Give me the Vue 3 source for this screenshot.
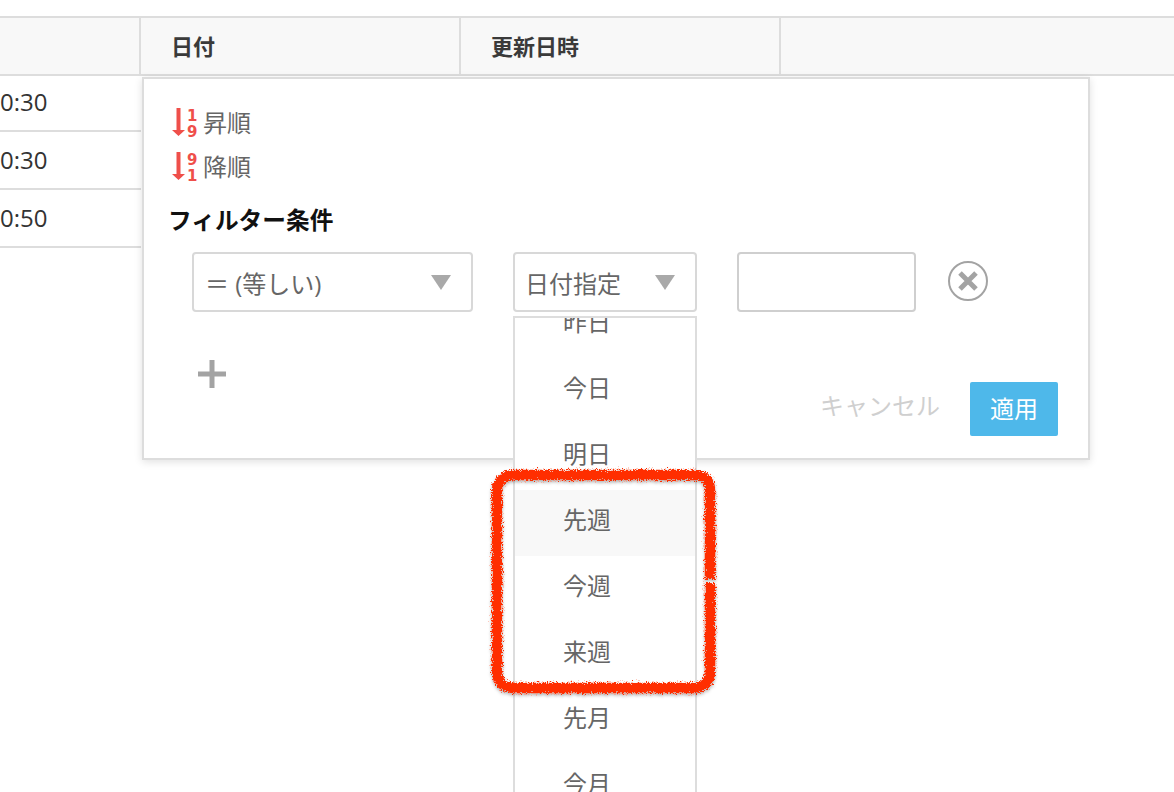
<script setup>
const rows = ['0:30', '0:30', '0:50']
const sorts = [
  { label: '昇順', a: '1', b: '9' },
  { label: '降順', a: '9', b: '1' },
]
const options = [
  { label: '昨日' }, { label: '今日' }, { label: '明日' },
  { label: '先週', on: true }, { label: '今週' }, { label: '来週' },
  { label: '先月' }, { label: '今月' },
]
</script>

<template>
  <div class="page">
    <div class="head">
      <div class="hcell first"></div>
      <div class="hcell mid">日付</div>
      <div class="hcell mid">更新日時</div>
      <div class="hcell"></div>
    </div>
    <div v-for="(r, i) in rows" :key="i" class="row">{{ r }}</div>

    <div class="popover">
      <div v-for="s in sorts" :key="s.label" class="sort">
        <span class="sicon">
          <svg width="13" height="28" viewBox="0 0 13 28"><path d="M4.500 0h4v22h4.500l-6.500 6-6.500-6h4.500z" fill="#ef4f4a"/></svg>
          <span class="digits"><span>{{ s.a }}</span><span>{{ s.b }}</span></span>
        </span>
        <span class="slabel">{{ s.label }}</span>
      </div>
      <div class="title">フィルター条件</div>
      <div class="filters">
        <div class="select wide"><span>＝ (等しい)</span><i class="caret"></i></div>
        <div class="select narrow"><span>日付指定</span><i class="caret"></i></div>
        <div class="input"></div>
        <svg class="close" width="40" height="40" viewBox="0 0 40 40">
          <circle cx="20" cy="20" r="19" fill="none" stroke="#a3a3a3" stroke-width="2"/>
          <path d="M12 12l16 16M28 12l-16 16" stroke="#a3a3a3" stroke-width="5" fill="none"/>
        </svg>
      </div>
      <div class="foot">
        <svg class="plus" width="28" height="28" viewBox="0 0 28 28"><path d="M11.500 0h5v11.500H28v5H16.500V28h-5V16.500H0v-5h11.500z" fill="#a3a3a3"/></svg>
        <div class="actions">
          <span class="cancel">キャンセル</span>
          <span class="apply">適用</span>
        </div>
      </div>
    </div>

    <div class="menu">
      <div v-for="o in options" :key="o.label" class="opt" :class="{ on: o.on }"><span>{{ o.label }}</span></div>
    </div>

    <svg class="mark" width="240" height="240" viewBox="0 0 240 240">
      <defs>
        <filter id="rough" x="-10%" y="-10%" width="120%" height="120%">
          <feTurbulence type="fractalNoise" baseFrequency="0.8" numOctaves="2" seed="4"/>
          <feDisplacementMap in="SourceGraphic" scale="8" xChannelSelector="R" yChannelSelector="G"/>
          <feDropShadow dx="0" dy="2" stdDeviation="1.500" flood-color="#000" flood-opacity="0.3"/>
        </filter>
      </defs>
      <g filter="url(#rough)" fill="none" stroke="#ff2d00" stroke-width="10.500">
        <path d="M225 120V32Q225 16 209 16H30Q12 16 12 34V211Q12 229 30 229H208Q225 229 225 212V124"/>
      </g>
    </svg>
  </div>
</template>

<style>
html, body { margin: 0; background: #fff; }
</style>

<style scoped>
.page {
  position: relative;
  width: 1174px;
  height: 792px;
  overflow: hidden;
  padding-top: 16px;
  box-sizing: border-box;
  background: #fff;
  font-family: "Open Sans", "Noto Sans CJK JP", sans-serif;
  font-size: 24px;
  color: #666;
}
.head {
  display: grid;
  grid-template-columns: 139px 320px 320px 1fr;
  height: 60px;
  box-sizing: border-box;
  background: #f8f8f8;
  border-top: 2px solid #ddd;
  border-bottom: 2px solid #ddd;
}
.hcell {
  display: flex;
  align-items: center;
  padding-left: 30px;
  box-sizing: border-box;
  border-left: 2px solid #ddd;
  font-size: 22px;
  font-weight: 700;
  color: #3a3a3a;
  padding-bottom: 2px;
}
.hcell.first { border-left: 0; }
.row {
  width: 141px;
  height: 58px;
  box-sizing: border-box;
  border-bottom: 2px solid #ddd;
  display: flex;
  align-items: center;
  color: #333;
  padding-bottom: 1px;
}
.head + .row { height: 56px; padding-bottom: 3px; }
.popover {
  position: absolute;
  left: 142px;
  top: 77px;
  width: 948px;
  height: 383px;
  box-sizing: border-box;
  background: #fff;
  border: 2px solid #ddd;
  box-shadow: 0 2px 8px rgba(0, 0, 0, 0.12);
  padding: 22px 30px 0 25px;
}
.sort {
  display: flex;
  align-items: center;
  gap: 6px;
  height: 44px;
  padding-left: 3px;
  line-height: 40px;
}
.sicon { display: flex; gap: 2px; height: 28px; align-items: flex-start; margin-top: -2px; }
.sicon svg { display: block; }
.digits {
  display: flex;
  flex-direction: column;
  width: 10px;
  font-size: 15px;
  font-weight: 700;
  line-height: 16px;
  color: #ef4f4a;
  font-family: "DejaVu Sans", sans-serif;
  text-align: center;
}
.title {
  margin-top: 10px;
  margin-left: -1px;
  font-size: 23.700px;
  font-weight: 700;
  line-height: 42px;
  padding-bottom: 2px;
  color: #111;
}
.filters {
  display: flex;
  align-items: center;
  margin-top: 9px;
  margin-left: 23px;
  gap: 40px;
}
.select, .input {
  height: 60px;
  box-sizing: border-box;
  border: 2px solid #d8d8d8;
  border-radius: 4px;
}
.select {
  display: flex;
  align-items: center;
  justify-content: space-between;
  padding: 0 20px 0 11px;
}
.wide { width: 281px; }
.narrow { width: 184px; padding-left: 10px; }
.input { width: 179px; border-color: #cfcfcf; }
.caret {
  width: 0;
  height: 0;
  border-left: 10px solid transparent;
  border-right: 10px solid transparent;
  border-top: 15px solid #a9a9a9;
}
.close { margin-left: -8px; margin-top: -2px; }
.foot {
  display: flex;
  justify-content: space-between;
  align-items: flex-start;
  margin-top: 48px;
  margin-left: 29px;
}
.plus { display: block; }
.actions {
  display: flex;
  align-items: center;
  gap: 30px;
  margin-top: 22px;
}
.cancel { color: #cfcfcf; padding-bottom: 9px; }
.apply {
  width: 88px;
  height: 54px;
  border-radius: 2px;
  background: #4eb8ea;
  color: #fff;
  display: flex;
  align-items: center;
  justify-content: center;
  padding-bottom: 4px;
  box-sizing: border-box;
}
.menu {
  position: absolute;
  left: 513px;
  top: 316px;
  width: 184px;
  height: 520px;
  box-sizing: border-box;
  border: 2px solid #ddd;
  background: #fff;
  overflow: hidden;
}
.opt {
  height: 66px;
  padding: 0 0 10px 48px;
  box-sizing: border-box;
  display: flex;
  align-items: center;
}
.opt:first-child { margin-top: -26px; }
.opt.on { background: #f8f8f8; }
.mark {
  position: absolute;
  left: 485px;
  top: 459px;
  overflow: visible;
}
</style>
